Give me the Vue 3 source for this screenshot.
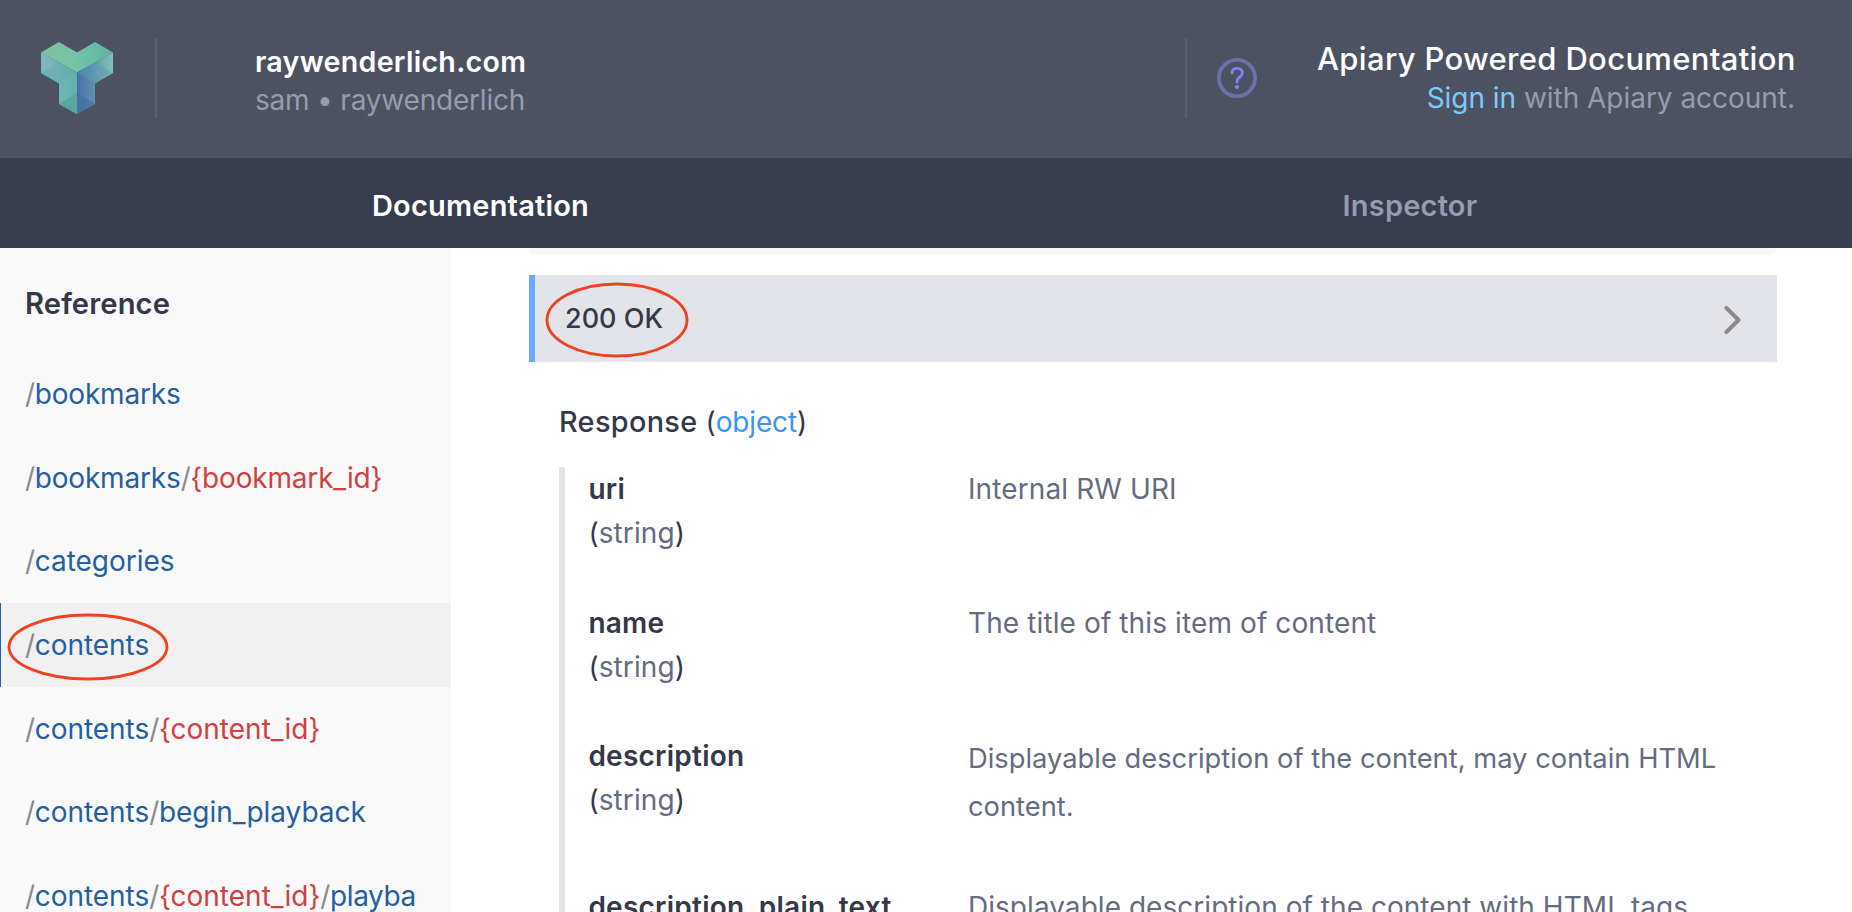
<script setup>
const paths = [
  ['bookmarks'],
  ['bookmarks', '{bookmark_id}'],
  ['categories'],
  ['contents'],
  ['contents', '{content_id}'],
  ['contents', 'begin_playback'],
  ['contents', '{content_id}', 'playba'],
]
const activeIndex = 3

const attributes = [
  { name: 'uri', text: 'Internal RW URI' },
  { name: 'name', text: 'The title of this item of content' },
  { name: 'description', text: 'Displayable description of the content, may contain HTML content.', long: true },
  { name: 'description_plain_text', text: 'Displayable description of the content with HTML tags' },
]
</script>

<template>
  <div class="page">
    <header class="header">
      <div class="brand">
        <svg class="logo" width="72" height="72" viewBox="0 0 72 72">
          <defs>
            <linearGradient id="topLeft" x1="0" x2="1"><stop offset="0" stop-color="#83bf9e" /><stop offset="1" stop-color="#74c4a9" /></linearGradient>
            <linearGradient id="topRight" x1="0" x2="1"><stop offset="0" stop-color="#73c3a6" /><stop offset="1" stop-color="#5eb5a2" /></linearGradient>
            <linearGradient id="leftSide" x1="0" x2="1"><stop offset="0" stop-color="#83b5c4" /><stop offset="1" stop-color="#60b3ab" /></linearGradient>
            <linearGradient id="rightSide" x1="0" x2="1"><stop offset="0" stop-color="#4573aa" /><stop offset="1" stop-color="#82c2b6" /></linearGradient>
            <linearGradient id="stemRight" x1="0" x2="1"><stop offset="0" stop-color="#4672aa" /><stop offset="1" stop-color="#5e93ad" /></linearGradient>
          </defs>
          <path d="M0 10.500 18 0 36 10.500V30.500Z" fill="url(#topLeft)" />
          <path d="M36 10.500 54 0 72 10.500 36 30.500Z" fill="url(#topRight)" />
          <path d="M0 10.500 36 30.500V72L18 62V41.500L0 31Z" fill="url(#leftSide)" />
          <path d="M0 31 18 20.500 36 30.500 18 41.500Z" fill="#62aaa9" opacity=".4" />
          <path d="M72 10.500 36 30.500V50L54 41.500 72 31Z" fill="url(#rightSide)" />
          <path d="M36 30.500 54 20.500 72 31 54 41.500Z" fill="#5c96b0" opacity=".4" />
          <path d="M36 30.500 54 41.500V62L36 72Z" fill="url(#stemRight)" />
          <path d="M18 62 36 51V72Z" fill="#5aa79e" />
          <path d="M36 51 54 62 36 72Z" fill="#476fa3" opacity=".7" />
        </svg>
        <span class="divider"></span>
        <div class="project">
          <div class="project-name">raywenderlich.com</div>
          <div class="project-owner">sam • raywenderlich</div>
        </div>
      </div>
      <div class="account">
        <span class="divider"></span>
        <svg class="help" width="40" height="40" viewBox="0 0 40 40" fill="none">
          <circle cx="20" cy="20" r="18.100" stroke="#6c70ab" stroke-width="3.800" />
          <path d="M15 15C15 12 17.100 10.300 20.300 10.300C23.400 10.300 25.300 12.200 25.300 14.700C25.300 17 24.200 18.100 22.400 19.400C20.500 20.800 20 21.800 20 24.200" stroke="#7288fb" stroke-width="2.800" stroke-linecap="round" />
          <circle cx="20" cy="29" r="2.100" fill="#7288fb" />
        </svg>
        <div class="account-text">
          <div class="powered">Apiary Powered Documentation</div>
          <div class="signin"><a>Sign in</a> with Apiary account.</div>
        </div>
      </div>
    </header>

    <nav class="tabs">
      <div class="tab tab-doc">Documentation</div>
      <div class="tab tab-inspector">Inspector</div>
    </nav>

    <div class="body">
      <aside class="sidebar">
        <div class="sidebar-title"><span>Reference</span></div>
        <div v-for="(path, i) in paths" :key="i" class="path" :class="{ active: i === activeIndex, bookmark: path[0] === 'bookmarks' }">
          <span><template v-for="(part, j) in path" :key="j"><span class="slash">/</span><span :class="part[0] === '{' ? 'param' : 'segment'">{{ part }}</span></template></span>
          <svg v-if="i === activeIndex" class="mark mark-path" width="162" height="68" viewBox="0 0 162 68" fill="none">
            <ellipse cx="81" cy="34" rx="79" ry="32" stroke="#ee4323" stroke-width="2.900" />
          </svg>
        </div>
      </aside>

      <main class="content">
        <div class="code-tail"></div>
        <div class="status">
          <span class="status-text">200 OK</span>
          <svg class="chevron" width="18" height="28" viewBox="0 0 18 28" fill="none">
            <path d="M2.500 2 14.500 14 2.500 26" stroke="#8b8b8b" stroke-width="4" stroke-linecap="round" stroke-linejoin="round" />
          </svg>
          <svg class="mark mark-status" width="144" height="76" viewBox="0 0 144 76" fill="none">
            <ellipse cx="72" cy="38" rx="70" ry="36" stroke="#ee4323" stroke-width="2.900" />
          </svg>
        </div>
        <div class="response"><span class="response-word">Response</span><span class="response-type">(<span class="object">object</span>)</span></div>
        <div class="attributes">
          <div v-for="attr in attributes" :key="attr.name" class="attribute" :class="{ long: attr.long }">
            <div class="attr-key">
              <div class="attr-name">{{ attr.name }}</div>
              <div class="attr-type">(<span>string</span>)</div>
            </div>
            <div class="attr-text">{{ attr.text }}</div>
          </div>
        </div>
      </main>
    </div>
  </div>
</template>

<style>
body { margin: 0; overflow: hidden; }
</style>

<style scoped>
.page {
  width: 1852px;
  height: 912px;
  display: flex;
  flex-direction: column;
  overflow: hidden;
  background: #fff;
  color: #343849;
  font-family: Inter, "Liberation Sans", sans-serif;
  font-size: 28px;
  white-space: nowrap;
}
.header {
  flex: none;
  height: 158px;
  box-sizing: border-box;
  padding: 38px 57px 0 41px;
  display: flex;
  justify-content: space-between;
  background: #4d5262;
}
.brand, .account { display: flex; height: 80px; }
.logo { margin-top: 4px; margin-right: 42px; }
.divider { width: 2px; height: 80px; background: #5b6070; }
.project { margin-left: 98px; }
.project-name { margin-top: 5px; line-height: 38px; font-size: 28.600px; letter-spacing: .28px; font-weight: 600; color: #fff; }
.project-owner { line-height: 38px; letter-spacing: -.2px; color: #979bae; }
.help { margin: 20px 0 0 30px; }
.account-text { width: 478px; margin-left: 60px; text-align: right; }
.powered { margin-top: 2px; line-height: 38px; font-size: 31px; letter-spacing: .33px; font-weight: 500; color: #fff; }
.signin { margin-top: 1px; line-height: 38px; letter-spacing: -.03px; color: #979bae; }
.signin a { color: #7bcbfa; }
.tabs {
  flex: none;
  height: 90px;
  display: flex;
  background: #383c4f;
}
.tab { flex: none; line-height: 96px; font-size: 29px; letter-spacing: .2px; font-weight: 600; }
.tab-doc { width: 961px; text-align: center; color: #fff; }
.tab-inspector { width: 898px; text-align: center; color: #979bae; }
.body { flex: 1; min-height: 0; display: flex; }
.sidebar { width: 451px; flex: none; background: #f9f9f9; }
.sidebar-title {
  height: 104px;
  box-sizing: border-box;
  padding: 6px 0 0 25px;
  display: flex;
  align-items: center;
  font-size: 29.200px;
  letter-spacing: .1px;
  font-weight: 600;
}
.path {
  position: relative;
  height: 83.700px;
  box-sizing: border-box;
  padding-left: 25px;
  display: flex;
  align-items: center;
  letter-spacing: -.03px;
}
.path.bookmark { letter-spacing: -.17px; }
.path.active { background: #f1f1f1; box-shadow: inset 1px 0 #2460a0; }
.slash { color: #8a8a8a; letter-spacing: -.4px; }
.segment { color: #2460a0; }
.param { color: #d23f3f; letter-spacing: 0; }
.bookmark .param { letter-spacing: -.18px; }
.param + .slash, .param + .slash + .segment { letter-spacing: -.4px; }
.mark { position: absolute; }
.mark-path { left: 7px; top: 10px; }
.mark-status { left: 10px; top: 7px; }
.content { flex: 1; padding: 0 75px 0 78px; }
.code-tail { height: 7px; border-radius: 0 0 8px 8px; background: #f6f8fa; }
.status {
  position: relative;
  margin-top: 20px;
  height: 87px;
  box-sizing: border-box;
  border-left: 6px solid #6aaaf8;
  padding: 0 35px 0 30px;
  display: flex;
  align-items: center;
  justify-content: space-between;
  background: #e3e4e9;
}
.status-text { font-size: 27px; font-weight: 500; }
.chevron { margin-top: 3px; }
.response { margin: 40px 0 0 30px; line-height: 40px; display: flex; gap: 8px; }
.response-word { font-size: 28.800px; letter-spacing: .35px; font-weight: 500; }
.object { color: #3e95ec; letter-spacing: -.15px; }
.attributes { margin: 25px 0 0 30px; border-left: 6px solid #e4e4e4; padding-left: 23.400px; }
.attribute { display: flex; height: 133.500px; }
.attribute.long { height: 151px; }
.attr-key { width: 379.600px; flex: none; }
.attr-name { line-height: 44px; letter-spacing: .25px; font-weight: 600; }
.attr-type { line-height: 44px; letter-spacing: .1px; }
.attr-type span { color: #656b80; }
.attr-text { line-height: 44px; letter-spacing: .11px; color: #656b80; }
.attribute:last-child .attr-text { letter-spacing: .04px; }
.long .attr-text { width: 780px; padding-top: 1px; line-height: 48px; font-size: 27.300px; letter-spacing: .01px; white-space: normal; }
</style>
